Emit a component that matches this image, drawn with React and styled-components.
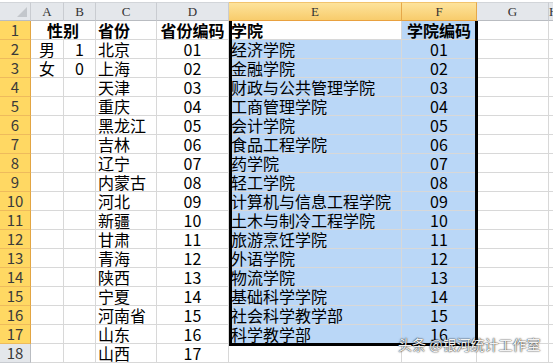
import React from "react";
import styled, { createGlobalStyle } from "styled-components";

const Global = createGlobalStyle`
  html, body { margin: 0; padding: 0; background: #fff; overflow: hidden; }
  body { font-family: "Noto Sans CJK SC", sans-serif; }
`;

const Sheet = styled.div`
  position: relative;
  width: 553px;
  height: 363px;
  overflow: hidden;
  padding-top: 2px;
  box-sizing: border-box;
  background: #fff;
`;

const Grid = styled.div`
  display: grid;
  grid-template-columns: 31px 33px 32px 61px 72px 173px 75px 72px 1fr;
  grid-template-rows: 19px repeat(18, 19px);
`;

const Corner = styled.div`
  grid-row: 1;
  grid-column: 1;
  position: relative;
  box-sizing: border-box;
  background: #e4e7eb;
  border-top: 1px solid #d2d5d9;
  border-right: 1px solid #c9ccd1;
  border-bottom: 1px solid #b9bcc1;
  &::after {
    content: "";
    position: absolute;
    right: 3px;
    bottom: 3px;
    width: 0;
    height: 0;
    border-left: 10px solid transparent;
    border-bottom: 10px solid #c3c7cc;
  }
`;

const ColHead = styled.div`
  grid-row: 1;
  grid-column: ${(p) => p.$col};
  box-sizing: border-box;
  border-top: 1px solid ${(p) => (p.$active ? "#f2c46e" : "#d2d5d9")};
  border-right: 1px solid ${(p) => (p.$active ? "#e5a84a" : "#c9ccd1")};
  border-bottom: 1px solid ${(p) => (p.$active ? "#e9a13f" : "#b9bcc1")};
  background: ${(p) =>
    p.$active ? "linear-gradient(#fde39c, #f8cc6c)" : "#e4e7eb"};
  font: 400 13px/17px "Liberation Serif", serif;
  color: #333;
  text-align: center;
`;

const RowHead = styled.div`
  grid-row: ${(p) => p.$row};
  grid-column: 1;
  box-sizing: border-box;
  border-right: 1px solid ${(p) => (p.$active ? "#e2a543" : "#b9bcc1")};
  border-bottom: 1px solid ${(p) => (p.$active ? "#eebb5c" : "#c9ccd1")};
  background: ${(p) => (p.$active ? "#ffd863" : "#e4e7eb")};
  font: 400 15px/18px "Noto Sans CJK SC", sans-serif;
  color: #3a3a3a;
  text-align: center;
`;

const Cell = styled.div`
  grid-row: ${(p) => p.$row};
  grid-column: ${(p) => p.$col} / span ${(p) => p.$span || 1};
  box-sizing: border-box;
  border-right: 1px solid #d8d8d8;
  border-bottom: 1px solid #d8d8d8;
  background: ${(p) => (p.$sel ? "#bad7f7" : "#fff")};
  padding: 0 2px;
  font: ${(p) => (p.$bold ? 700 : 400)} 16px/18px "Noto Sans CJK SC", sans-serif;
  color: #000;
  text-align: ${(p) => p.$align || "left"};
  white-space: nowrap;
`;

const Selection = styled.div`
  grid-row: 2 / 19;
  grid-column: 6 / 8;
  margin: 0 -1px -2px 0;
  position: relative;
  z-index: 2;
  pointer-events: none;
  border: 3px solid #000;
  border-top: none;
  &::after {
    content: "";
    position: absolute;
    right: -4px;
    bottom: -4px;
    width: 5px;
    height: 5px;
    background: #000;
    border: 1px solid #fff;
  }
`;

const Watermark = styled.div`
  position: absolute;
  left: 398px;
  top: 335px;
  z-index: 3;
  font: 400 14px/18px "Noto Sans CJK SC", sans-serif;
  color: rgba(255, 255, 255, 0.95);
  text-shadow: 0 0 1px #222, 0 0 2px rgba(0, 0, 0, 0.7);
  white-space: nowrap;
`;

const provinces = ["北京", "上海", "天津", "重庆", "黑龙江", "吉林", "辽宁", "内蒙古", "河北", "新疆", "甘肃", "青海", "陕西", "宁夏", "河南省", "山东", "山西"];
const colleges = ["经济学院", "金融学院", "财政与公共管理学院", "工商管理学院", "会计学院", "食品工程学院", "药学院", "轻工学院", "计算机与信息工程学院", "土木与制冷工程学院", "旅游烹饪学院", "外语学院", "物流学院", "基础科学学院", "社会科学教学部", "科学教学部"];

const letters = ["A", "B", "C", "D", "E", "F", "G", "H"];
const pad = (n) => String(n).padStart(2, "0");

function cellFor(r, c) {
  // r: 1..18, c: 0..7 (A..H)
  if (r === 1) {
    switch (c) {
      case 0: return { text: "性别", bold: true, align: "center", span: 2 };
      case 1: return null;
      case 2: return { text: "省份", bold: true };
      case 3: return { text: "省份编码", bold: true, align: "center" };
      case 4: return { text: "学院", bold: true };
      case 5: return { text: "学院编码", bold: true, align: "center" };
      default: return { text: "" };
    }
  }
  const i = r - 2;
  switch (c) {
    case 0: return { text: r === 2 ? "男" : r === 3 ? "女" : "", align: "center" };
    case 1: return { text: r === 2 ? "1" : r === 3 ? "0" : "", align: "center" };
    case 2: return { text: provinces[i] || "" };
    case 3: return { text: i < 17 ? pad(i + 1) : "", align: "center" };
    case 4: return { text: colleges[i] || "" };
    case 5: return { text: i < 16 ? pad(i + 1) : "", align: "center" };
    default: return { text: "" };
  }
}

export default function App() {
  const cells = [];
  for (let r = 1; r <= 18; r++) {
    cells.push(
      <RowHead key={`h${r}`} $row={r + 1} $active={r <= 17}>
        {r}
      </RowHead>
    );
    for (let c = 0; c < 8; c++) {
      const d = cellFor(r, c);
      if (!d) continue;
      const sel = (c === 4 || c === 5) && r <= 17 && !(r === 1 && c === 4);
      cells.push(
        <Cell
          key={`c${r}-${c}`}
          $row={r + 1}
          $col={c + 2}
          $span={d.span}
          $bold={d.bold}
          $align={d.align}
          $sel={sel}
        >
          {d.text}
        </Cell>
      );
    }
  }
  return (
    <>
      <Global />
      <Sheet>
        <Grid>
          <Corner />
          {letters.map((l, i) => (
            <ColHead key={l} $col={i + 2} $active={l === "E" || l === "F"}>
              {l}
            </ColHead>
          ))}
          {cells}
          <Selection />
        </Grid>
        <Watermark>头条 @银河统计工作室</Watermark>
      </Sheet>
    </>
  );
}
